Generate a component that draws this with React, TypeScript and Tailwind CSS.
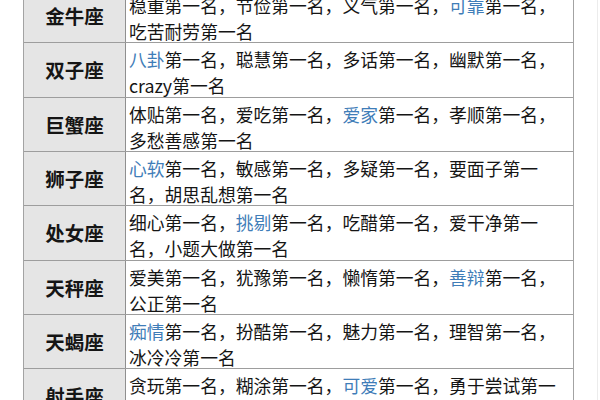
import React from "react";

interface Row {
  sign: string;
  lines: { text: string; blue?: boolean }[][];
}

const rows: Row[] = [
  {
    sign: "金牛座",
    lines: [
      [{ text: "稳重第一名，节俭第一名，义气第一名，" }, { text: "可靠", blue: true }, { text: "第一名，" }],
      [{ text: "吃苦耐劳第一名" }],
    ],
  },
  {
    sign: "双子座",
    lines: [
      [{ text: "八卦", blue: true }, { text: "第一名，聪慧第一名，多话第一名，幽默第一名，" }],
      [{ text: "crazy第一名" }],
    ],
  },
  {
    sign: "巨蟹座",
    lines: [
      [{ text: "体贴第一名，爱吃第一名，" }, { text: "爱家", blue: true }, { text: "第一名，孝顺第一名，" }],
      [{ text: "多愁善感第一名" }],
    ],
  },
  {
    sign: "狮子座",
    lines: [
      [{ text: "心软", blue: true }, { text: "第一名，敏感第一名，多疑第一名，要面子第一" }],
      [{ text: "名，胡思乱想第一名" }],
    ],
  },
  {
    sign: "处女座",
    lines: [
      [{ text: "细心第一名，" }, { text: "挑剔", blue: true }, { text: "第一名，吃醋第一名，爱干净第一" }],
      [{ text: "名，小题大做第一名" }],
    ],
  },
  {
    sign: "天秤座",
    lines: [
      [{ text: "爱美第一名，犹豫第一名，懒惰第一名，" }, { text: "善辩", blue: true }, { text: "第一名，" }],
      [{ text: "公正第一名" }],
    ],
  },
  {
    sign: "天蝎座",
    lines: [
      [{ text: "痴情", blue: true }, { text: "第一名，扮酷第一名，魅力第一名，理智第一名，" }],
      [{ text: "冰冷冷第一名" }],
    ],
  },
  {
    sign: "射手座",
    lines: [
      [{ text: "贪玩第一名，糊涂第一名，" }, { text: "可爱", blue: true }, { text: "第一名，勇于尝试第一" }],
      [{ text: "名，乐观第一名" }],
    ],
  },
];

export default function App() {
  return (
    <div
      className="w-[600px] h-[400px] overflow-hidden bg-white flex text-[#151515]"
      style={{ fontFamily: '"Noto Sans CJK SC", "Noto Sans", sans-serif' }}
    >
      <div className="w-[23px] shrink-0" />
      {/* 表格 */}
      <div className="w-[551px] shrink-0 -mt-[11px] border-l border-r border-[#a3a3a3]">
        {rows.map((row) => (
          <div key={row.sign} className="flex h-[54.33px] border-b border-[#9d9d9d]">
            <div className="w-[102px] shrink-0 bg-[#e5e5e5] border-r border-[#8f8f8f] flex items-center justify-center font-bold text-[19.5px] tracking-[0px]">
              {row.sign}
            </div>
            <div className="flex-1 pl-[3px] pt-[3px] text-[17.8px] leading-[26px] whitespace-nowrap">
              {row.lines.map((line, i) => (
                <div key={i}>
                  {line.map((seg, j) =>
                    seg.blue ? (
                      <span key={j} className="text-[#3f7db8]">
                        {seg.text}
                      </span>
                    ) : (
                      <span key={j}>{seg.text}</span>
                    )
                  )}
                </div>
              ))}
            </div>
          </div>
        ))}
      </div>
      <div className="flex-1 flex justify-end">
        <div className="w-px h-full bg-[#ececec] mr-[2px]" />
      </div>
    </div>
  );
}
